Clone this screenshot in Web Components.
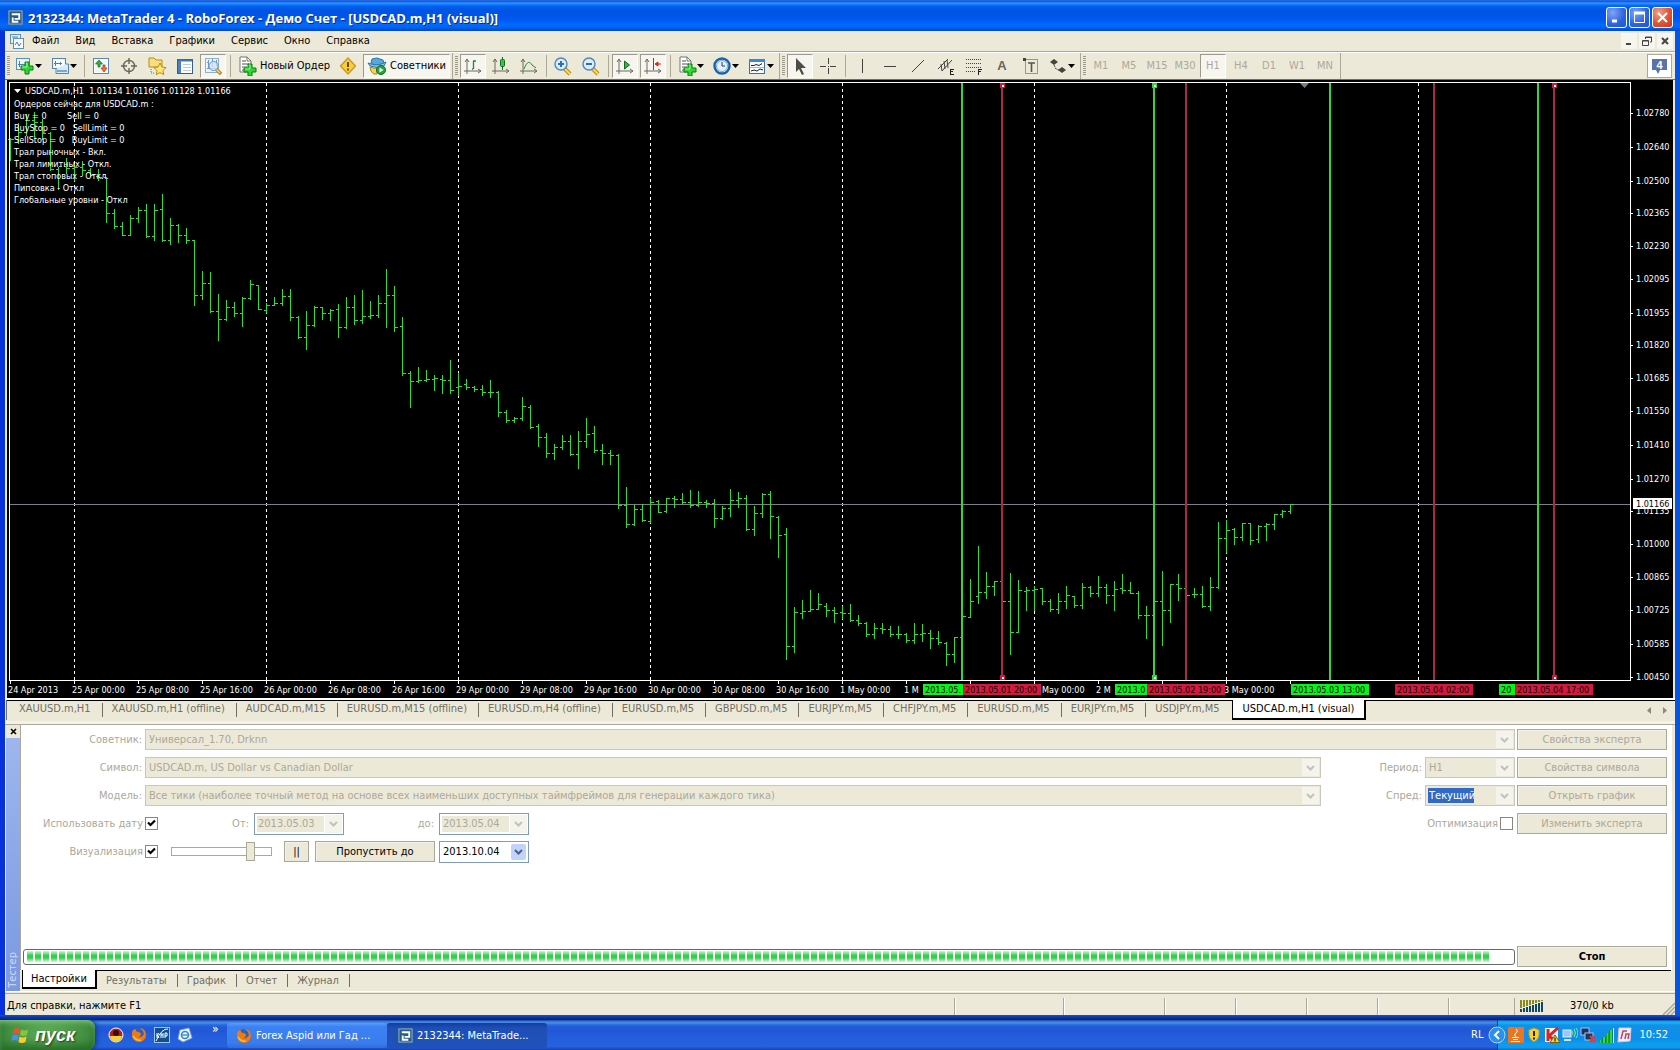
<!DOCTYPE html>
<html lang="ru">
<head>
<meta charset="utf-8">
<title>2132344: MetaTrader 4 - RoboForex</title>
<style>
html,body{margin:0;height:100%;overflow:hidden}
body{display:flex;flex-direction:column;background:#245edb;font:11px/14px "DejaVu Sans Condensed","DejaVu Sans",sans-serif;color:#000}
</style>
</head>
<body>
<xp-window>
  <xp-caption slot="caption">2132344: MetaTrader 4 - RoboForex - Демо Счет - [USDCAD.m,H1 (visual)]</xp-caption>
  <mt-menu></mt-menu>
  <mt-toolbar></mt-toolbar>
  <mt-chart></mt-chart>
  <mt-tabs></mt-tabs>
  <mt-tester></mt-tester>
  <mt-status>Для справки, нажмите F1</mt-status>
</xp-window>
<xp-taskbar></xp-taskbar>
<script>
const define = (name, html, ready) => customElements.define(name, class extends HTMLElement {
  constructor() {
    super();
    const root = this.attachShadow({ mode: 'open' });
    root.innerHTML = typeof html === 'function' ? html(this) : html;
  }
  connectedCallback() { if (ready) ready(this, this.shadowRoot); }
});
const svg = (w, h, body, extra = '') => `<svg width="${w}" height="${h}" viewBox="0 0 ${w} ${h}" aria-hidden="true" ${extra}>${body}</svg>`;
const base = `:host,*{box-sizing:border-box}button,select,input{font:inherit;margin:0;padding:0}svg{display:block;flex:none}`;

/* ---------- icons, 20 x 20 ---------- */
const plus = (x, y) => `<path d="M${x + 4} ${y}h4v4h4v4h-4v4h-4v-4h-4v-4h4z" fill="#2fd62f" stroke="#0a7a12"/><path d="M${x + 5} ${y + 1}h1v4h-5" fill="none" stroke="#9df59a"/>`;
const axes = `<path d="M4 3v15M1 15h17M2 6l2-3 2 3M15 13l3 2-3 2" fill="none" stroke="#6a6a63"/>`;
const page = `<path d="M3 1h7l4 4v11H3z" fill="#fff" stroke="#77776f"/><path d="M10 1v4h4" fill="none" stroke="#77776f"/><path d="M5 5h4M5 8h7M5 11h5M5 14h3" stroke="#555"/>`;
const lens = s => `<path d="M11 12l6 6" stroke="#b98714" stroke-width="4"/><path d="M11 12l6 6" stroke="#f7dc62" stroke-width="2"/><circle cx="8" cy="8" r="6" fill="#d8ecfb" stroke="#4f86bd" stroke-width="1.4"/><path d="${s}" stroke="#2f6ea8" stroke-width="2"/>`;
const I = {
  newchart: `<rect x="1.500" y="2.500" width="13" height="11" fill="#eaf3fc" stroke="#5c8dbd"/><path d="M4.500 5v6M3 8.500h9M10.500 7v3" stroke="#4d7fae" fill="none"/>${plus(6, 6)}`,
  profiles: `<rect x="2.500" y="2.500" width="13" height="10" fill="#d9e9f8" stroke="#5386b8"/><rect x="3.500" y="3.500" width="11" height="8" fill="#fff"/><path d="M5.500 5v5M4 7.500h8M10.500 6v3" stroke="#4d7fae"/><path d="M6 13v4.500h12.500V8H16" fill="#d9e9f8" stroke="#5386b8"/><path d="M7 15h10" stroke="#79a6d2" stroke-width="2"/>`,
  market: `<rect x="2.500" y="2.500" width="15" height="15" fill="#fbfdff" stroke="#5b87b5"/><path d="M4 6h12M4 9h12M4 12h12M4 15h12" stroke="#e0eaf5"/><path d="M8 4l3.500 4H9v3H7V8H4.500z" fill="#35b03b" stroke="#16701c" stroke-width=".7"/><path d="M13 16l3-4h-2V9h-2v3h-2z" fill="#f0743a" stroke="#a53612" stroke-width=".7"/>`,
  target: `<circle cx="10" cy="10" r="5.500" fill="none" stroke="#66665f" stroke-width="1.400"/><path d="M10 2v6M10 12v6M2 10h6M12 10h6" stroke="#66665f" stroke-width="1.400"/>`,
  star: `<path d="M2 2h5l2 2h6v7H2z" fill="#f9df80" stroke="#b38c1d"/><path d="M4 13v4h4" fill="none" stroke="#8a6d20" stroke-dasharray="1 1"/><path d="M13 7l2 4 4 .6-3 3 .8 4-3.800-2-3.800 2 .8-4-3-3 4-.6z" fill="#ffe873" stroke="#b98a14"/>`,
  nav: `<rect x="2.500" y="3.500" width="15" height="14" fill="#fff" stroke="#2f5f96"/><path d="M3 4.500h14" stroke="#3f78b8" stroke-width="2"/><rect x="3" y="5" width="3" height="12" fill="#4a80bd"/><path d="M8 8.500h8M8 11.500h8M8 14.500h8" stroke="#b8cee6"/>`,
  tester: `<rect x="2.500" y="2.500" width="13" height="14" fill="#eaf3fc" stroke="#8db0d6"/><path d="M5.500 4v9M9.500 3v8M13.500 4v6M4 12.500h9M4 6.500h2" stroke="#6f97c4"/><path d="M13 13l5 5" stroke="#b98714" stroke-width="3.500"/><path d="M13 13l4 4" stroke="#f7dc62" stroke-width="1.500"/><circle cx="10.500" cy="10" r="4.500" fill="#cfe5f8" fill-opacity=".8" stroke="#6d97c6"/>`,
  order: page + plus(7, 8),
  warn: `<path d="M10 2l7.500 8L10 18 2.500 10z" fill="#f8cf37" stroke="#c79a2a" stroke-width="1.400" stroke-linejoin="round"/><path d="M10 6v5M10 12.500v2" stroke="#6d4c08" stroke-width="2"/>`,
  expert: `<path d="M4 7l1-4 5-1 6 2 1 3-7 3z" fill="#58a8dc" stroke="#2d75a8"/><path d="M1 7q9 4 18-1l-2 4q-7 3-14 0z" fill="#84c5ee" stroke="#2d75a8"/><path d="M3 11q4 2 7 1v6H7q-4-2-4-7z" fill="#f4d35c" stroke="#a8851c"/><circle cx="14" cy="14" r="4.500" fill="#27a53a" stroke="#0c6e1e"/><path d="M12.500 11.500l4 2.500-4 2.500z" fill="#fff"/>`,
  bars: axes + `<path d="M10.500 5v8M10 13h-1M10 5h3" stroke="#1d8c2a" fill="none" stroke-width="1.300"/>`,
  candles: axes + `<path d="M11.500 1v13" stroke="#146e1f"/><rect x="9.500" y="3.500" width="4" height="7" rx="1" fill="#35c545" stroke="#146e1f"/>`,
  line: axes + `<path d="M5 13c3-8 6-8 8-4l4 3" stroke="#1d8c2a" fill="none"/>`,
  zoomin: lens('M5 8h6M8 5v6'), zoomout: lens('M5 8h6'),
  scroll: axes + `<path d="M9.500 5l5 4-5 4z" fill="#35b545" stroke="#126a1c"/>`,
  shift: axes + `<path d="M10.500 2v12" stroke="#245c8f"/><path d="M18 8h-5M15 6l-3 2 3 2z" stroke="#d02b17" fill="#d02b17"/>`,
  indic: page + plus(7, 8),
  clock: `<circle cx="10" cy="10" r="7.500" fill="#fff" stroke="#1c62a8" stroke-width="2.400"/><circle cx="10" cy="10" r="5.500" fill="#e6f1fb" stroke="#6ea8dc"/><path d="M10 6v4h3" stroke="#1d3c5c" fill="none"/>`,
  templ: `<rect x="2.500" y="3.500" width="15" height="14" fill="#f5faff" stroke="#3b70a8"/><path d="M2 4.500h16" stroke="#3f86cf" stroke-width="3"/><path d="M4 9.500h3l2-1 3 1 3-2M4 15l3-1 3 1 3-2 3 1" stroke="#222" fill="none"/><path d="M3 11.500h14" stroke="#9cc0e2"/>`,
  cursor: `<path d="M6 2v14l3-3 3 6 2-1-3-6h5z" fill="#4d4d48"/>`,
  cross: `<path d="M10.500 2v6M10.500 12v6M2 10.500h6M12 10.500h6M10 10.500h1" stroke="#44443f"/>`,
  vline: `<path d="M10.500 3v14" stroke="#44443f"/>`, hline: `<path d="M4 10.500h12" stroke="#44443f"/>`,
  trend: `<path d="M4 16L16 4" stroke="#44443f"/>`,
  chan: `<path d="M2 13L12 3M6 15L16 4M5 8l1 7M8 5l1 8M11 4l1 8" stroke="#44443f"/><path d="M14 13.500h4M14 15.500h3M14 18.500h4M14.500 13v6" stroke="#222"/>`,
  fibo: `<path d="M2 3.500h16M2 7.500h16M2 11.500h16M2 15.500h9" stroke="#44443f" stroke-dasharray="1 1"/><path d="M14 13.500h4M14 15.500h3M14.500 13v6" stroke="#222"/>`,
  label: `<path d="M5.500 3.500v14h12v-14z" fill="none" stroke="#44443f" stroke-dasharray="1 1"/><path d="M8 7h7M11.500 7v9" stroke="#55554f" stroke-width="1.600"/><path d="M3 2h3v3h-3z" fill="#44443f"/>`,
  arrows: `<path d="M6 3l4 3-4 3-4-3z" fill="#44443f"/><path d="M6 9l2 4 3 1" stroke="#44443f" fill="none" stroke-dasharray="2 1"/><path d="M14 17l-4-3 4-3 4 3z" fill="#44443f"/>`
};
const logo = s => svg(s, s, `<g transform="scale(${s / 16})"><rect width="16" height="16" rx="1" fill="#2a5b86"/><rect x="1" y="1" width="14" height="14" fill="none" stroke="#8fb6d6"/><path d="M4 4.500h8v5H7M4 12.500h7M5 8v5" stroke="#fff" stroke-width="2" fill="none"/></g>`);
const chevron = c => svg(9, 6, `<path d="M1 1l3.500 3.500L8 1" stroke="${c}" stroke-width="2" fill="none"/>`);

/* ---------- window shell ---------- */
define('xp-window', `<style>${base}
:host{display:flex;flex-direction:column;flex:1;min-height:0;background:linear-gradient(90deg,#0831d9,#166aee 60%,#0855dd)}
.in{display:flex;flex-direction:column;flex:1;min-height:0;margin:0 5px;background:#ece9d8}
.foot{height:5px;flex:none;background:linear-gradient(#1550d8,#0a2f9c 60%,#061c60)}
</style><slot name="caption"></slot><div class="in"><slot></slot></div><div class="foot"></div>`);

define('xp-caption', `<style>${base}
:host{display:flex;align-items:center;height:31px;flex:none;padding:4px 7px 0 8px;gap:5px;color:#fff;
background:linear-gradient(#3b6fd8 0,#0058ee 4%,#3593ff 10%,#127dff 14%,#0262ee 20%,#0054e3 32%,#0055eb 56%,#005bf5 66%,#026afe 80%,#0062ef 90%,#0046c8)}
h1{flex:1;margin:0;font:bold 13px/18px "Open Sans","Noto Sans",sans-serif;white-space:nowrap;text-shadow:1px 1px #0a2a80}
nav{display:flex;gap:2px}
button{width:21px;height:21px;border:1px solid #fff;border-radius:3px;background:radial-gradient(circle at 30% 25%,#7fa4f5,#2b62e0 60%,#2454cf);display:grid;place-items:center}
.x{background:radial-gradient(circle at 30% 25%,#f0a085,#dd5434 55%,#c63a1a)}
</style>${logo(15)}<h1><slot></slot></h1><nav>
<button aria-label="Свернуть">${svg(13, 13, '<path d="M2 10h5" stroke="#fff" stroke-width="3"/>')}</button>
<button aria-label="Развернуть">${svg(13, 13, '<path d="M1.500 2v9.500h10V2" stroke="#fff" fill="none"/><path d="M1 2h11" stroke="#fff" stroke-width="3"/>')}</button>
<button class="x" aria-label="Закрыть">${svg(13, 13, '<path d="M2 2l9 9M11 2l-9 9" stroke="#fff" stroke-width="2"/>')}</button></nav>`);

define('mt-menu', `<style>${base}
:host{display:flex;align-items:center;height:21px;flex:none;padding:0 2px 0 5px;border-bottom:1px solid #aca899}
.ic{margin-right:8px}
a{color:#000;text-decoration:none;margin-right:16px}
.sp{flex:1}
button{width:16px;height:16px;margin-left:2px;border:0;background:#f6f5ee;display:grid;place-items:center}
</style><span class="ic">${svg(14, 15, '<rect x=".5" y=".5" width="10" height="9" fill="#e3effb" stroke="#5b8fc6"/><rect x="3.500" y="4.500" width="10" height="10" fill="#f4f9ff" stroke="#5b8fc6"/><path d="M5 11l2-3 2 4 2-3M2 3h6" stroke="#4d7fae" fill="none"/>')}</span>
${['Файл', 'Вид', 'Вставка', 'Графики', 'Сервис', 'Окно', 'Справка'].map(t => `<a href="#">${t}</a>`).join('')}<span class="sp"></span>
<button aria-label="Свернуть окно">${svg(10, 10, '<path d="M2 8h5" stroke="#444" stroke-width="2"/>')}</button>
<button aria-label="Восстановить">${svg(10, 10, '<path d="M3.500 3V1h6v5H8M.5 4.500h6v5h-6zM.5 5h6M3 1.500h6" stroke="#444" fill="none"/>')}</button>
<button aria-label="Закрыть окно">${svg(10, 10, '<path d="M2 2l6 6M8 2L2 8" stroke="#444" stroke-width="2"/>')}</button>`);

/* ---------- toolbar ---------- */
define('mt-tool', el => {
  const icon = el.getAttribute('icon'), on = el.hasAttribute('on'), dd = el.hasAttribute('menu');
  return `<style>${base}
:host{display:block;flex:none}
button{display:flex;align-items:center;justify-content:center;width:28px;height:24px;border:1px solid transparent;background:none;color:inherit}
button.dd{width:35px;justify-content:flex-start;padding-left:3px}
button.wide{width:auto;padding:0 3px;gap:3px}
button.on{width:26px;margin:0 1px;border-color:#9d9a8c #fff #fff #9d9a8c;background:#f6f5ef}
button.on.wide{width:auto}
</style><button class="${on ? 'on ' : ''}${dd ? 'dd ' : ''}${el.hasAttribute('wide') ? 'wide' : ''}" ${icon ? `aria-label="${icon}"` : ''}>${icon ? svg(20, 20, I[icon]) : ''}<slot></slot>${dd ? svg(7, 4, '<path d="M0 0h7L3.500 4z" fill="#000"/>') : ''}</button>`;
});
const tool = s => s.split(' ').map(t => {
  if (t === '|') return '<i class="sep"></i>';
  const on = t.endsWith('*'), menu = t.endsWith('+');
  return `<mt-tool icon="${t.replace(/[*+]/, '')}" ${on ? 'on' : ''} ${menu ? 'menu' : ''}></mt-tool>`;
}).join('');
define('mt-toolbar', () => `<style>${base}
:host{display:flex;align-items:center;height:28px;flex:none;border-top:1px solid #fff;border-bottom:1px solid #716f64}
.g{display:flex;align-items:center;height:26px;border-right:1px solid #aca899;padding-right:1px}
.g::before{content:"";width:3px;height:20px;margin:0 1px 0 2px;background:repeating-linear-gradient(#9d9a8c 0 1px,transparent 1px 2px)}
.sep{width:1px;height:22px;margin:0 2px 0 3px;background:#aca899}
.tf{color:#aca899}
.sp{flex:1}
.chat{width:25px;height:24px;margin-right:3px;border:1px solid #aca899;background:#fff;display:grid;place-items:center}
.chat b{grid-area:1/1;color:#fff;font:bold 11px/12px "Liberation Sans",sans-serif;padding-bottom:3px}
.chat svg{grid-area:1/1}
.letter{font:bold 13px/16px "Liberation Sans",sans-serif;color:#66665f}
</style>
<div class="g">${tool('newchart+ profiles+ | market target star nav tester* |')}<mt-tool icon="order" wide>Новый Ордер</mt-tool>${tool('warn')}<mt-tool icon="expert" wide on>Советники</mt-tool></div>
<div class="g">${tool('bars* candles line | zoomin zoomout | scroll* shift* | indic+ clock+ templ+')}</div>
<div class="g">${tool('cursor* cross | vline hline trend chan fibo')}<mt-tool class="letter">A</mt-tool>${tool('label arrows+')}</div>
<div class="g tf">${['M1', 'M5', 'M15', 'M30', 'H1', 'H4', 'D1', 'W1', 'MN'].map(t => `<mt-tool ${t === 'H1' ? 'on' : ''}>${t}</mt-tool>`).join('')}</div>
<span class="sp"></span><button class="chat">${svg(17, 17, '<path d="M1 1h15v11H9l-2 4-2-4H1z" fill="#5a72a8"/>')}<b>4</b></button>`);

/* ---------- chart ---------- */
const BARS = [ // open, high, low, close as plot rows; one bar each 8 px
[139,138,160,139],[139,123,143,132],[132,114,135,120],[120,112,136,122],[122,119,139,133],[133,132,170,169],[169,167,189,166],[166,158,173,168],[168,164,180,167],[167,161,175,170],[170,168,176,175],[176,169,180,177],
[177,177,222,213],[213,209,228,226],[226,222,235,235],[235,215,235,218],[218,207,222,210],[210,204,237,236],[236,204,240,210],[209,194,241,240],[240,218,244,225],[225,224,242,235],[235,228,243,240],[240,240,305,295],
[295,271,299,283],[283,272,312,311],[311,294,340,319],[319,300,320,307],[307,302,316,313],[313,297,326,298],[298,280,299,284],[285,285,309,309],[310,303,312,305],[305,297,305,303],[303,289,305,296],[296,289,320,317],
[317,316,338,337],[337,311,349,325],[325,306,326,307],[307,307,319,313],[313,309,320,310],[309,304,337,327],[327,297,328,307],[307,295,324,320],[320,290,323,316],[316,301,318,315],[315,295,317,303],[303,269,327,295],
[295,286,331,327],[326,317,375,373],[373,371,407,381],[381,367,382,380],[380,370,381,379],[379,375,390,378],[379,375,393,380],[380,360,393,390],[387,373,395,386],[384,379,389,387],[387,386,391,389],[389,385,395,392],
[392,380,397,392],[392,391,416,412],[412,410,422,420],[420,417,422,418],[418,397,420,406],[407,405,428,427],[426,424,446,437],[437,433,457,453],[453,444,459,447],[447,435,449,441],[441,435,455,454],[454,431,468,441],
[441,418,447,434],[433,426,452,450],[450,444,464,453],[453,450,464,455],[455,454,508,505],[505,487,527,524],[524,505,525,509],[509,504,521,520],[521,498,522,502],[501,500,512,512],[511,498,512,498],[498,496,507,499],
[499,493,503,502],[502,490,507,505],[505,491,506,502],[502,500,507,503],[503,499,527,518],[518,506,519,508],[508,489,516,500],[500,492,507,498],[498,495,530,529],[529,506,535,513],[513,493,517,494],[494,491,538,516],
[517,516,557,535],[534,528,659,646],[646,607,652,612],[613,600,618,611],[611,590,611,609],[609,593,609,604],[606,603,616,610],[610,607,622,613],[612,606,618,613],[613,604,621,620],[620,615,625,623],[623,622,636,634],
[634,623,638,628],[628,623,633,629],[629,626,636,634],[634,626,638,634],[634,633,642,640],[640,623,643,634],[634,624,641,633],[633,630,648,638],[638,631,644,642],[643,642,665,654],[654,637,662,637],[637,616,637,616],
[617,579,617,601],[596,546,603,592],[592,572,598,586],[586,581,595,581],[581,581,601,601],[601,573,654,632],[632,580,632,590],[591,587,610,590],[590,586,610,589],[588,588,604,601],[601,599,611,609],[609,593,613,601],
[601,586,608,595],[596,596,607,605],[605,583,608,587],[587,586,596,593],[593,576,596,587],[587,584,603,595],[595,581,610,589],[588,574,593,590],[590,582,593,593],[593,591,618,615],[615,606,638,615],[615,601,615,601],
[601,571,645,610],[610,584,622,584],[584,574,600,588],[588,588,595,595],[594,588,597,594],[594,586,607,606],[606,577,610,587],[587,522,588,538],[538,520,552,530],[529,528,544,537],[537,523,540,523],[523,523,544,540],
[539,525,542,526],[526,523,540,524],[524,514,529,514],[514,510,517,511],[511,504,513,504]];
const TIMES = ['24 Apr 2013', '25 Apr 00:00', '25 Apr 08:00', '25 Apr 16:00', '26 Apr 00:00', '26 Apr 08:00', '26 Apr 16:00', '29 Apr 00:00', '29 Apr 08:00', '29 Apr 16:00', '30 Apr 00:00', '30 Apr 08:00', '30 Apr 16:00', '1 May 00:00', '1 M', '', '', '2 M', '', '3 May 00:00', ''];
const PRICES = ['1.02780', '1.02640', '1.02500', '1.02365', '1.02230', '1.02095', '1.01955', '1.01820', '1.01685', '1.01550', '1.01410', '1.01270', '1.01135', '1.01000', '1.00865', '1.00725', '1.00585', '1.00450'];
const MARKS = [ // x, buy?, handles?, caption; a caption is cut where the next mark begins
[962, 1, 0, '2013.05.'], [1002, 0, 1, '2013.05.01 20:00'], [1154, 1, 1, '2013.0'], [1186, 0, 0, '2013.05.02 19:00'],
[1330, 1, 0, '2013.05.03 13:00'], [1434, 0, 0, '2013.05.04 02:00'], [1538, 1, 0, '20'], [1554, 0, 1, '2013.05.04 17:00']];
define('mt-chart', `<style>${base}
:host{display:block;position:relative;flex:1;min-height:0;margin:0 2px;background:#000;color:#fff;font-size:9px;line-height:12px}
svg{width:100%;height:100%;overflow:hidden}
text{font-size:9px;fill:#fff}
pre{position:absolute;left:7px;top:4px;margin:0;font:inherit}
pre div{height:14px;display:flex;align-items:center;gap:4px}
pre div svg{width:7px;height:4px}
</style><svg role="img" aria-label="USDCAD.m,H1"></svg><pre><div><svg viewBox="0 0 7 4"><path d="M0 0h7L3.500 4z" fill="#fff"/></svg><span>USDCAD.m,H1  1.01134 1.01166 1.01128 1.01166</span></div>Ордеров сейчас для USDCAD.m :
Buy = 0        Sell = 0
BuyStop = 0   SellLimit = 0
SellStop = 0   BuyLimit = 0
Трал рыночных - Вкл.
Трал лимитных - Откл.
Трал стоповых - Откл.
Пипсовка - Откл
Глобальные уровни - Откл</pre>`, (el, root) => {
  const w = el.clientWidth, right = w - 43 + 7, out = [];
  const line = (d, c, extra = '') => out.push(`<path d="${d}" stroke="${c}" fill="none" shape-rendering="crispEdges" ${extra}/>`);
  const priceY = p => Math.round(677 - (p - 1.0045) * 24206);
  for (let x = 74; x < 1600; x += 192) line(`M${x + .5} 83V680`, '#fff', 'stroke-dasharray="3 3"');
  line(`M10 504.500H${right}`, '#78808c');
  line(BARS.map(([o, h, l, c], i) => { const x = 10 + 8 * i + .5; return `M${x} ${h}V${l + 1}M${x - 3} ${o + .5}H${x}M${x} ${c + .5}h3`; }).join(''), '#2fdd35');
  for (const [x, buy, grip] of MARKS) {
    const c = buy ? '#32d83a' : '#ae2a42';
    line(`M${x} 83V680`, c, 'stroke-width="2"');
    if (grip) for (const y of [85, 677]) out.push(`<rect x="${x - 2}" y="${y - 2}" width="5" height="5" fill="${buy ? '#20e030' : '#dc143c'}"/><rect x="${x}" y="${y}" width="2" height="2" fill="#fff"/>`);
  }
  out.push('<path d="M1300 83h9l-4.500 5z" fill="#708090"/>');
  line(`M9.500 680V82.500H${right + .5}V680.500H9`, '#fff');
  TIMES.forEach((t, i) => { const x = 10 + 64 * i; line(`M${x + .5} 681v3`, '#fff'); if (t) out.push(`<text x="${x - 2}" y="693">${t}</text>`); });
  out.push('<text x="1042" y="693">May 00:00</text>');
  for (const [x, buy, , t] of MARKS) out.push(`<rect x="${x - 39}" y="684" width="78" height="11" fill="${buy ? '#00f814' : '#d4183e'}"/><text x="${x - 37}" y="693" style="fill:#000">${t}</text>`);
  for (const p of PRICES) { const y = priceY(p); line(`M${right} ${y + .5}h3`, '#fff'); out.push(`<text x="${right + 6}" y="${y + 3}">${p}</text>`); }
  out.push(`<rect x="${right + 3}" y="498" width="39" height="11" fill="#fff"/><text x="${right + 6}" y="507" style="fill:#000">1.01166</text>`);
  root.querySelector('svg').innerHTML = `<g transform="translate(-7 -80)">${out.join('')}</g>`;
});

/* ---------- chart tabs ---------- */
define('mt-tabs', `<style>${base}
:host{display:flex;height:27px;flex:none;border-top:2px solid #fff;border-bottom:1px solid #aca899;box-shadow:inset 0 -3px #f4f2e8}
:host::before{content:"";width:1px;height:20px;margin-left:1px;background:#716f64}
nav{display:flex;flex:1;height:24px;border-top:1px solid #000}
a{color:#716f64;text-decoration:none;padding:1px 0 0 9px;height:20px;white-space:nowrap;display:flex;gap:11px}
a::after{content:"";width:1px;height:14px;margin-top:1px;background:#716f64}
a:first-child{padding-left:12px}
a:nth-last-of-type(2)::after{visibility:hidden}
a.on{background:#fff;color:#000;border:1px solid #000;border-top:0;border-width:0 2px 2px 1px;margin-top:-1px;padding:2px 10px 0}
a.on::after{display:none}
.ar{display:flex;gap:12px;align-items:center;margin:0 8px 4px auto}
</style><nav>${['XAUUSD.m,H1', 'XAUUSD.m,H1 (offline)', 'AUDCAD.m,M15', 'EURUSD.m,M15 (offline)', 'EURUSD.m,H4 (offline)', 'EURUSD.m,M5', 'GBPUSD.m,M5', 'EURJPY.m,M5', 'CHFJPY.m,M5', 'EURUSD.m,M5', 'EURJPY.m,M5', 'USDJPY.m,M5'].map(t => `<a href="#">${t}</a>`).join('')}<a class="on" href="#">USDCAD.m,H1 (visual)</a><span class="ar">${svg(4, 7, '<path d="M4 0v7L0 3.500z" fill="#8d8a7c"/>')}${svg(4, 7, '<path d="M0 0v7l4-3.500z" fill="#8d8a7c"/>')}</span></nav>`);

/* ---------- form controls ---------- */
define('xp-combo', el => {
  const v = el.getAttribute('value'), off = el.hasAttribute('disabled'), edit = el.hasAttribute('edit'), id = el.getAttribute('label');
  return `<style>${base}
:host{display:grid;grid-template-columns:1fr 19px;height:21px;border:1px solid #c9c7ba;background:#ece9d8;min-width:0}
:host([date]){height:22px;border-color:#7f9db9;background:#fff}
select,input{grid-area:1/1/2/3;appearance:none;border:0;background:none;padding:0 0 0 3px;color:#aca899;opacity:1;min-width:0;height:100%;border-radius:0}
:host([date][disabled]) select{grid-area:1/1/2/2;margin:2px 0 2px 2px;padding-left:1px;height:16px;background:#ece9d8}
:host(:not([disabled])) select{color:#000}
input{grid-area:1/1/2/2;width:46px;height:15px;margin:2px;padding:0 0 0 1px;background:#316ac5;color:#fff}
span{grid-area:1/2;pointer-events:none;margin:1px;background:#f4f3ec;display:grid;place-items:center}
:host([date]:not([disabled])) span{background:#c1d2fb;margin:2px;border-radius:2px}
</style>${edit ? `<input aria-label="${id}" value="${v}">` : `<select aria-label="${id}" ${off ? 'disabled' : ''}><option>${v}</option></select>`}<span>${chevron(off || edit ? '#c4c2b6' : '#4d6185')}</span>`;
});
define('xp-check', el => `<style>${base}
:host{display:block}
label{display:flex;align-items:center;justify-content:flex-end;gap:2px;color:#aca899;white-space:nowrap}
.b{display:grid;width:13px;height:13px}
input{appearance:none;grid-area:1/1;border:1px solid #8a887c;background:#fff;width:13px;height:13px}
svg{grid-area:1/1;place-self:center;pointer-events:none}
</style><label><slot></slot><span class="b"><input type="checkbox" ${el.hasAttribute('checked') ? 'checked' : ''}>${el.hasAttribute('checked') ? svg(9, 9, '<path d="M1 3.500L3.500 6 8 1.500" stroke="#000" stroke-width="2.200" fill="none"/>') : ''}</span></label>`);
define('xp-button', el => `<style>${base}
:host{display:block;height:21px}
button{width:100%;height:100%;border:1px solid #aca899;background:#ece9d8;color:#000;box-shadow:inset 1px 1px #f4f2e8;white-space:nowrap}
:host([disabled]) button{color:#aca899}
:host([strong]) button{font-weight:bold}
</style><button ${el.hasAttribute('disabled') ? 'disabled' : ''}><slot></slot></button>`);

/* ---------- strategy tester ---------- */
define('mt-tester', `<style>${base}
:host{display:flex;flex:none;border-bottom:1px solid #fff;height:267px}
.side{width:15px;display:flex;flex-direction:column;align-items:center;padding-left:1px}
.side button{height:13px;width:12px;border:0;background:none;display:grid;place-items:center}
.bar{flex:1;width:14px;background:linear-gradient(#9db6ee,#7b98e1);color:#cfdcf8;display:flex;align-items:flex-end;justify-content:center;padding-bottom:3px}
.bar span{writing-mode:vertical-rl;transform:rotate(180deg)}
.main{flex:1;display:flex;flex-direction:column;min-width:0}
.body{flex:1;display:flex;flex-direction:column;background:#fff;border-left:1px solid #aca899;margin-right:3px;padding:4px 5px 3px 2px}
.row{display:flex;height:21px;align-items:center;margin-bottom:7px}
.l{width:119px;text-align:right;color:#aca899}
.row>*{flex:none}
.row>.l+xp-combo{flex:1;margin-left:3px}
.side-l{color:#aca899;width:101px;text-align:right;margin-right:3px}
.n{width:90px}
.btn{width:150px;margin-left:2px}
.opt{margin-right:2px}
.w1{width:135px}
.from{width:91px;text-align:right;color:#aca899;margin-right:5px}
.to{width:90px;text-align:right;color:#aca899;margin-right:5px}
.row>.grow{flex:1}
input[type=range]{appearance:none;width:101px;height:19px;margin:0 12px 0 13px;background:none}
input[type=range]::-webkit-slider-runnable-track{height:9px;border:1px solid #aca899;background:#fff}
input[type=range]::-webkit-slider-thumb{appearance:none;width:9px;height:19px;margin-top:-6px;border:1px solid #aca899;background:#ece9d8}
.pause{width:25px}.skip{width:120px;margin:0 4px 0 6px}
.foot{display:flex;align-items:center;margin-top:auto}
.prog{flex:1;height:16px;border:1px solid #686868;border-radius:3px;padding:1px 25px 2px 3px;display:flex}
.prog i{flex:1;background:linear-gradient(#fffc,#fff0 40% 62%,#fffc),repeating-linear-gradient(90deg,#2fd248 0 6px,#fff 6px 8px)}
.tabs{display:flex;height:21px;border-top:1px solid #000;margin:0 4px 0 2px}
.tabs a{color:#716f64;text-decoration:none;display:flex;gap:10px;padding:3px 0 0 9px;height:18px}
.tabs a::after{content:"";width:1px;height:13px;background:#716f64}
.tabs a.on{background:#fff;color:#000;border:1px solid #000;border-width:0 2px 2px 1px;margin-top:-1px;height:19px;padding:2px 8px 0}
.tabs a.on::after{display:none}
</style>
<div class="side"><button aria-label="Закрыть панель">${svg(7, 7, '<path d="M1 1l5 5M6 1L1 6" stroke="#000" stroke-width="1.600"/>')}</button><div class="bar"><span>Тестер</span></div></div>
<div class="main"><div class="body">
<div class="row"><span class="l">Советник:</span><xp-combo disabled label="Советник" value="Универсал_1.70, Drknn"></xp-combo><xp-button class="btn" disabled>Свойства эксперта</xp-button></div>
<div class="row"><span class="l">Символ:</span><xp-combo disabled label="Символ" value="USDCAD.m, US Dollar vs Canadian Dollar"></xp-combo><span class="side-l">Период:</span><xp-combo class="n" disabled label="Период" value="H1"></xp-combo><xp-button class="btn" disabled>Свойства символа</xp-button></div>
<div class="row"><span class="l">Модель:</span><xp-combo disabled label="Модель" value="Все тики (наиболее точный метод на основе всех наименьших доступных таймфреймов для генерации каждого тика)"></xp-combo><span class="side-l">Спред:</span><xp-combo class="n" edit label="Спред" value="Текущий"></xp-combo><xp-button class="btn" disabled>Открыть график</xp-button></div>
<div class="row"><xp-check class="w1" checked>Использовать дату</xp-check><span class="from">От:</span><xp-combo class="n" date disabled label="От" value="2013.05.03"></xp-combo><span class="to">до:</span><xp-combo class="n" date disabled label="до" value="2013.05.04"></xp-combo><span class="grow"></span><xp-check class="opt">Оптимизация</xp-check><xp-button class="btn" disabled>Изменить эксперта</xp-button></div>
<div class="row"><xp-check class="w1" checked>Визуализация</xp-check><input type="range" aria-label="Скорость визуализации" min="0" max="100" value="82"><xp-button class="pause">||</xp-button><xp-button class="skip">Пропустить до</xp-button><xp-combo class="n" date label="Пропустить до" value="2013.10.04"></xp-combo></div>
<div class="foot"><div class="prog" role="progressbar" aria-valuenow="98"><i></i></div><xp-button class="btn" strong>Стоп</xp-button></div>
</div>
<div class="tabs"><a class="on" href="#">Настройки</a><a href="#">Результаты</a><a href="#">График</a><a href="#">Отчет</a><a href="#">Журнал</a></div></div>`);

/* ---------- status bar ---------- */
define('mt-status', `<style>${base}
:host{display:flex;height:22px;flex:none;margin-top:1px;border-top:1px solid #aca899;align-items:center;padding:3px 0 0 2px}
.m{flex:1}
i{height:17px;border-left:1px solid #aca899;box-shadow:inset 1px 0 #fff;width:71px}
i.w{width:109px}i.v{width:101px}i.e{width:66px}
.net{display:flex;align-items:center;border-left:1px solid #aca899;height:17px;padding-left:5px;gap:26px;width:161px}
.net svg:last-child{align-self:flex-end;margin-left:auto}
</style><span class="m"><slot></slot></span><i class="w"></i><i class="v"></i><i></i><i></i><i></i><i></i><i class="e"></i>
<span class="net">${svg(24, 12, Array.from({ length: 8 }, (_, i) => `<path d="M${i * 3 + 1} 0v${8 - i}" stroke="#8a8a1c" stroke-width="2"/><path d="M${i * 3 + 1} ${9 - i}V12" stroke="#0e4a68" stroke-width="2"/>`).join(''))}<span>370/0 kb</span>${svg(13, 13, '<path d="M1 13L13 1M5 13l8-8M9 13l4-4" stroke="#aca899" stroke-width="1.500"/>')}</span>`);

/* ---------- taskbar ---------- */
const fox = svg(16, 16, '<circle cx="8" cy="8" r="7" fill="#2f62b4"/><path d="M1 5q1-3 4-3-1 2 2 3 3 0 3 3l-2 2q3 1 5-3-1-4-4-6 6 1 6 7a7 7 0 0 1-14 0z" fill="#ee7a16"/><path d="M2 9q3 5 8 4" stroke="#f9bd2e" stroke-width="1.500" fill="none"/>');
define('xp-taskbar', `<style>${base}
:host{display:flex;height:30px;flex:none;color:#fff;align-items:stretch;background:linear-gradient(#1f3f96 0,#3165c4 3%,#3682e5 6%,#4490e6 10%,#2b71e0 15%,#235bd6 22%,#2157d6 38%,#245ddb 54%,#2562df 88%,#1d4ec0 96%,#1941a5)}
.start{width:95px;border:0;border-radius:0 8px 8px 0;color:#fff;display:flex;align-items:center;gap:6px;padding-left:11px;font:italic bold 18px/22px "Liberation Sans",sans-serif;text-shadow:1px 1px 2px #1a3d14;background:radial-gradient(circle,#5eac56 0,#3c873c 100%) center/cover;box-shadow:inset 0 4px 6px -3px #9ad694,inset 0 -5px 8px #256b28,2px 0 5px #0e3f9c}
.quick{display:flex;gap:7px;align-items:center;margin-left:13px;width:119px}
.quick span{margin:-12px 0 0 12px;font-size:12px}
.task{width:160px;margin-top:3px;height:25px;padding:0 9px;border:0;border-radius:3px;display:flex;align-items:center;gap:4px;color:#fff;text-align:left;white-space:nowrap;background:linear-gradient(#5b9bff,#3c81f3 15%,#3a7cee 80%,#2f6cdd)}
.task.on{background:linear-gradient(#143c9a,#1e4fb7 20%,#1f52ba);padding-left:11px}
.sp{flex:1}
.lang{align-self:center;margin-right:6px}
.tray{display:flex;align-items:center;gap:2px;padding:0 12px 0 0;margin-left:8px;background:linear-gradient(#0c59b9 1%,#139ee9 4%,#18b5f2 10%,#139beb 14%,#1290e8 19%,#0d8dea 63%,#0d9ff1 81%,#119be9 91%,#137ed7 97%,#095bc9);box-shadow:inset 1px 0 #0a3f9c}
.tray svg:first-child{margin-left:-9px}
.tray time{margin-left:5px}
</style>
<button class="start">${svg(18, 18, '<path d="M3 3q3-2 6 0L8 8Q5 6 2 8z" fill="#f0522a"/><path d="M10 3.500q3 2 7 0L16 9q-4 2-7 0z" fill="#86c440"/><path d="M1.500 9.500q3-2 6 0L6.500 15q-3-2-6 0z" fill="#4a8ff0"/><path d="M8.500 10.500q3 2 7 0L14.500 16q-4 2-7 0z" fill="#fbcb30"/>')}пуск</button>
<div class="quick">${svg(16, 16, '<circle cx="8" cy="8" r="7" fill="#b51e1e" stroke="#fff"/><path d="M2 9a6 6 0 0 0 12 0z" fill="#f6d23a"/><circle cx="8" cy="6" r="3" fill="#3a0d0d"/>')}${fox}${svg(16, 16, '<rect width="16" height="16" fill="#0f4f94"/><rect x=".5" y=".5" width="15" height="15" fill="none" stroke="#9ec3ea"/><path d="M3 6v5M3 9l2-3M3 8l2 3M7 6v5M7 8h2M9 6v5M11 11V6h2v3h-2M2 14Q8 1 14 2" stroke="#fff" fill="none"/>')}${svg(16, 16, '<path d="M3 3l9-2 3 10-9 4-5-3z" fill="#f2f7fc" stroke="#7ba4cf"/><circle cx="8" cy="8" r="3.500" fill="none" stroke="#2c86d8" stroke-width="1.600"/><path d="M5 8h6" stroke="#2c86d8" stroke-width="1.300"/>')}<span>»</span></div>
<button class="task">${fox}<span>Forex Aspid или Гад ...</span></button>
<button class="task on">${logo(15)}<span>2132344: MetaTrade...</span></button>
<span class="sp"></span><span class="lang">RL</span>
<div class="tray">${svg(18, 18, '<circle cx="9" cy="9" r="8" fill="#2b8ff0" stroke="#a9d6ff"/><path d="M11 5L7 9l4 4" stroke="#fff" stroke-width="2" fill="none"/>')}
${svg(16, 16, '<rect width="16" height="16" rx="1" fill="#ea7622"/><path d="M8 2q3 2 0 4t0 4M4 10.500h7M5 12.500h5M3 14.500h9" stroke="#fff" fill="none"/>')}
${svg(16, 16, '<path d="M8 1l5 2v5q0 4-5 7-5-3-5-7V3z" fill="#f8d22c" stroke="#b8983a"/><path d="M8 4v5M8 10.500v2" stroke="#222" stroke-width="2"/>')}
${svg(16, 16, '<rect x="1" y="1" width="13" height="14" fill="#f3f3f3"/><path d="M4 2v12M14 1L5 9l7 6" stroke="#d9241f" stroke-width="3" fill="none"/><path d="M11 8l5 7.500H6z" fill="#fbd13a" stroke="#7c5f0a"/><path d="M11 10.500v4" stroke="#000"/>')}
${svg(16, 16, '<rect x="1" y="3" width="8" height="7" fill="#9cc6f5" stroke="#d8ebff"/><path d="M2 12h7v2H2z" fill="#d5e4f2"/><path d="M10 4q2 2 0 4M12 2q3 4 0 8M14 1q4 5 0 10" stroke="#7df08b" fill="none"/>')}
${svg(16, 16, '<rect x="1" y="1" width="8" height="7" fill="#1d3461" stroke="#a9bfe2"/><rect x="5" y="6" width="8" height="7" fill="#1d3461" stroke="#a9bfe2"/><path d="M10 9l5 6M15 9l-5 6" stroke="#f0362a" stroke-width="2"/>')}
${svg(16, 16, '<path d="M2.500 13v3M6 10v6M9.500 6v10M13 3v13" stroke="#0a6d18" stroke-width="3"/><path d="M2.500 13v3M6 10v6M9.500 6v10M13 3v13" stroke="#2edb3a" stroke-width="2"/><path d="M15.500 1v15" stroke="#fff"/>')}
${svg(16, 16, '<path d="M3 1h12l-1 13-12 1z" fill="#f4eef4" stroke="#d8c8dc"/><path d="M5 12l2-8h4M9 12l1-5h3l-1 5" stroke="#b04a6a" stroke-width="1.500" fill="none"/>')}
<time>10:52</time></div>`);
</script>
</body>
</html>
